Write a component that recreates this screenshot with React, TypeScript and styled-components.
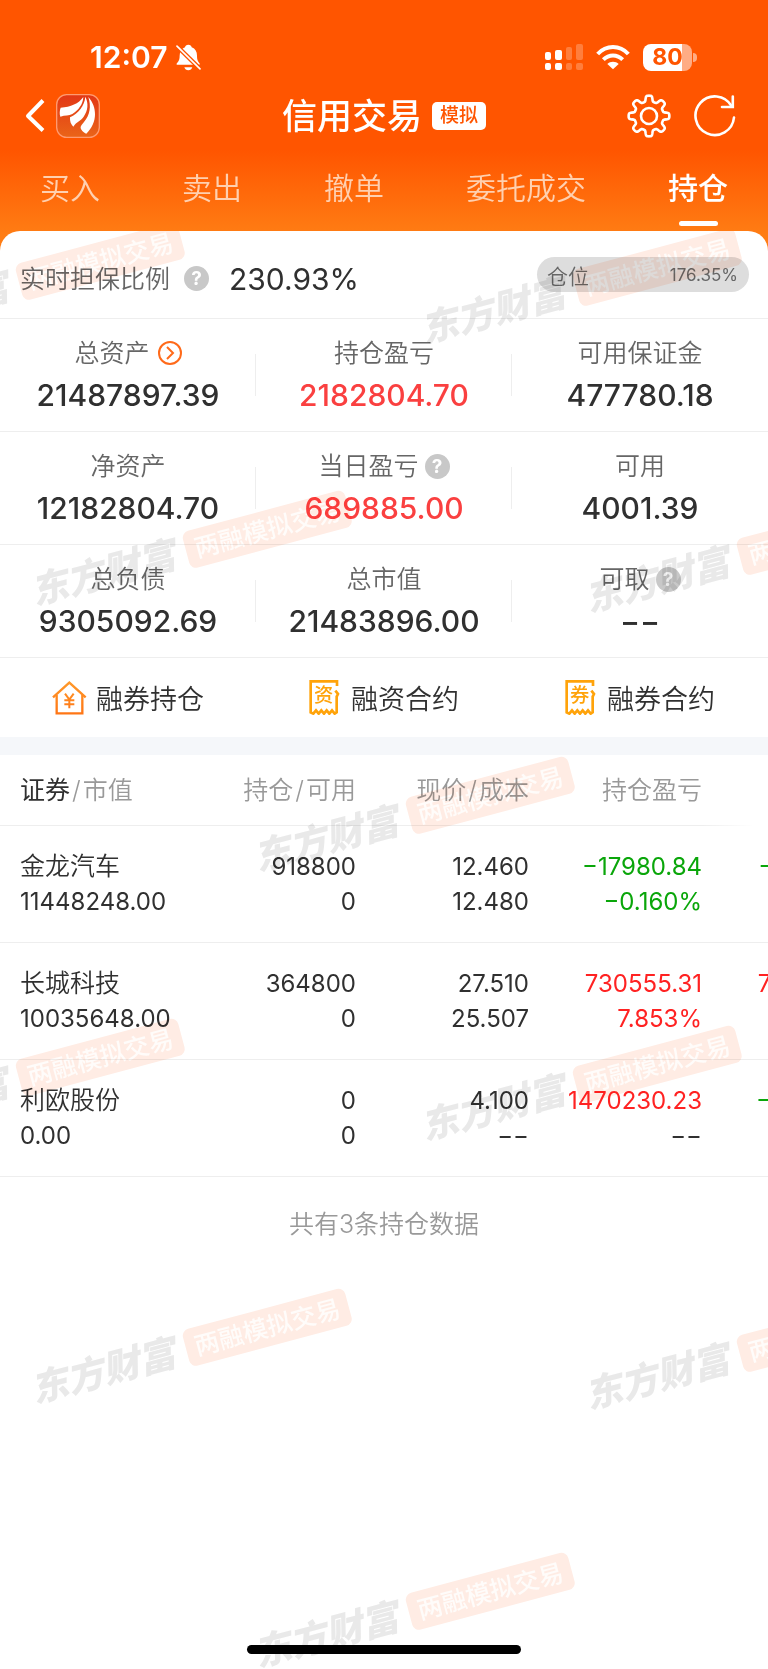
import React from "react";
import styled, { createGlobalStyle } from "styled-components";

const ORANGE = "#ff5500";
const INK = "#303030";
const GREY = "#666666";
const MUTED = "#999999";
const LINE = "#eeeeee";
const UP = "#ff2222";
const DOWN = "#0aa60a";

const Global = createGlobalStyle`
  * { box-sizing: border-box; }
  body { margin: 0; background: #fff; }
  body, button { font-family: Inter, "Noto Sans CJK SC", sans-serif; }
  button { border: 0; padding: 0; background: none; color: inherit; cursor: pointer; }
  a { color: inherit; text-decoration: none; }
`;

const Page = styled.div`
  position: relative;
  display: flex;
  flex-direction: column;
  min-height: 100vh;
  overflow: hidden;
  color: ${INK};
  background: linear-gradient(${ORANGE} 150px, #ff7d14 235px, #ff7d14 300px, #fff 300px);
`;

const StatusBar = styled.div`
  display: flex;
  align-items: center;
  justify-content: space-between;
  height: 82px;
  padding: 32px 71px 0 90px;
  color: #fff;
`;

const Clock = styled.div`
  display: flex;
  align-items: center;
  gap: 9px;
  font-size: 30px;
  font-weight: 600;
  line-height: 36px;
`;

const Indicators = styled.div`
  display: flex;
  align-items: center;
  gap: 13px;
`;

const Battery = styled.div`
  display: flex;
  align-items: center;
  gap: 1px;
`;

const BatteryBody = styled.div`
  width: 49px;
  height: 27px;
  border-radius: 8px;
  background: linear-gradient(to right, #fff 80%, #ffac84 80%);
  color: ${ORANGE};
  font-size: 23px;
  font-weight: 700;
  line-height: 27px;
  text-align: center;
`;

const BatteryTip = styled.div`
  width: 4px;
  height: 9px;
  border-radius: 0 4px 4px 0;
  background: #ffac84;
`;

const TitleBar = styled.header`
  display: grid;
  grid-template-columns: 1fr auto 1fr;
  align-items: center;
  height: 68px;
  padding: 0 24px;
  color: #fff;
`;

const BarSide = styled.div<{ $end?: boolean }>`
  display: flex;
  align-items: center;
  gap: ${(p) => (p.$end ? 22 : 10)}px;
  padding-right: ${(p) => (p.$end ? 8 : 0)}px;
  justify-content: ${(p) => (p.$end ? "flex-end" : "flex-start")};
`;

const IconButton = styled.button`
  display: flex;
`;

const Title = styled.h1`
  display: flex;
  align-items: center;
  gap: 10px;
  margin: 0;
  font-size: 35px;
  font-weight: 500;
  line-height: 48px;
`;

const ModeTag = styled.span`
  padding: 0 8px;
  border-radius: 5px;
  background: #fff;
  color: ${ORANGE};
  font-size: 19px;
  line-height: 28px;
`;

const Tabs = styled.nav`
  display: flex;
  justify-content: space-between;
  height: 81px;
  padding: 16px 40px 5px;
`;

const Tab = styled.a<{ $active?: boolean }>`
  display: flex;
  flex-direction: column;
  align-items: center;
  justify-content: space-between;
  color: ${(p) => (p.$active ? "#fff" : "#ffd0b0")};
  font-size: 30px;
  font-weight: ${(p) => (p.$active ? 500 : 350)};
  line-height: 44px;

  &::after {
    content: "";
    width: 39px;
    height: 5px;
    border-radius: 3px;
    background: ${(p) => (p.$active ? "#fff" : "transparent")};
  }
`;

const Sheet = styled.main`
  display: flex;
  flex: 1;
  flex-direction: column;
  border-radius: 20px 20px 0 0;
  background: #fff;
`;

const RatioRow = styled.section`
  display: flex;
  align-items: center;
  justify-content: space-between;
  height: 88px;
  padding: 0 19px 0 20px;
  border-bottom: 1px solid ${LINE};
`;

const Ratio = styled.div`
  display: flex;
  align-items: center;
  padding-top: 8px;
`;

const Label = styled.span`
  color: ${GREY};
  font-size: 25px;
  font-weight: 350;
  line-height: 36px;
`;

const RatioValue = styled.span`
  margin-left: 20px;
  font-size: 30px;
  line-height: 36px;
`;

const Help = styled.button<{ $gap: number }>`
  width: 25px;
  height: 25px;
  margin-left: ${(p) => p.$gap}px;
  border-radius: 50%;
  background: #c8c8c8;
  color: #fff;
  font-size: 19px;
  font-weight: 700;
  line-height: 25px;
`;

const Position = styled.div`
  display: flex;
  align-items: center;
  justify-content: space-between;
  width: 212px;
  height: 35px;
  padding: 0 11px 0 10px;
  border-radius: 18px;
  background: #dddddd;
  color: ${GREY};
  font-size: 17px;
`;

const PositionName = styled.span`
  font-size: 21px;
  font-weight: 350;
`;

const Stats = styled.dl`
  display: grid;
  grid-template-columns: repeat(3, 1fr);
  margin: 0;
`;

const Stat = styled.div`
  display: flex;
  flex-direction: column;
  align-items: center;
  height: 113px;
  padding-top: 16px;
  border-bottom: 1px solid ${LINE};
  background: linear-gradient(${LINE}, ${LINE}) right center / 1px 42px no-repeat;

  &:nth-child(3n) {
    background: none;
  }
`;

const StatName = styled.dt`
  display: flex;
  align-items: center;
`;

const StatValue = styled.dd<{ $up?: boolean }>`
  margin: 0;
  color: ${(p) => (p.$up ? "#fa4040" : INK)};
  font-size: 30px;
  font-weight: 500;
  line-height: 48px;
`;

const More = styled.button`
  display: flex;
  margin-left: 8px;
`;

const Shortcuts = styled.nav`
  display: grid;
  grid-template-columns: repeat(3, 1fr);
  height: 79px;
`;

const Shortcut = styled.a`
  display: flex;
  align-items: center;
  justify-content: center;
  gap: 9px;
  font-size: 27px;
  font-weight: 350;
`;

const Band = styled.div`
  height: 18px;
  background: #f5f7fa;
`;

const TableScroll = styled.div`
  overflow-x: auto;
  scrollbar-width: none;
`;

const Table = styled.table`
  width: 875px;
  border-collapse: separate;
  border-spacing: 0;
  table-layout: fixed;
  font-size: 24px;
  line-height: 35px;
`;

const Head = styled.th<{ $first?: boolean }>`
  width: ${(p) => (p.$first ? 183 : 173)}px;
  height: 71px;
  padding: ${(p) => (p.$first ? "0 0 0 20px" : "0")};
  border-bottom: 1px solid ${LINE};
  color: ${MUTED};
  font-size: 25px;
  font-weight: 350;
  text-align: ${(p) => (p.$first ? "left" : "right")};

  &:last-child {
    border-bottom: 0;
    background: linear-gradient(to right, ${LINE}, #fff) left bottom / 52px 1px no-repeat;
  }
`;

const HeadStrong = styled.span`
  color: ${INK};
  font-weight: 400;
`;

const Slash = styled.span`
  margin: 0 2px;
`;

const Cell = styled.td<{ $tone?: string; $first?: boolean }>`
  padding: 23px 0;
  padding-left: ${(p) => (p.$first ? 20 : 0)}px;
  border-bottom: 1px solid ${LINE};
  color: ${(p) => p.$tone || INK};
  text-align: ${(p) => (p.$first ? "left" : "right")};
  white-space: nowrap;
`;

const Line = styled.div<{ $name?: boolean; $plain?: boolean }>`
  height: 35px;
  font-size: ${(p) => (p.$name ? 25 : 24)}px;
  font-weight: ${(p) => (p.$name ? 350 : 400)};
  ${(p) => p.$plain && `color: ${INK};`}
`;

const Summary = styled.p`
  margin: 29px 0 0;
  color: ${MUTED};
  font-size: 25px;
  font-weight: 350;
  line-height: 36px;
  text-align: center;
`;

const HomeBar = styled.div`
  align-self: center;
  width: 274px;
  height: 9px;
  margin: auto 0 15px;
  border-radius: 5px;
  background: #000;
`;

const Marks = styled.div`
  position: absolute;
  inset: 231px 0 0;
  overflow: hidden;
  border-radius: 20px 20px 0 0;
  mix-blend-mode: multiply;
  pointer-events: none;
`;

const Mark = styled.div<{ $x: number; $y: number }>`
  position: absolute;
  left: ${(p) => p.$x}px;
  top: ${(p) => p.$y}px;
  display: flex;
  align-items: center;
  gap: 8px;
  width: 328px;
  height: 40px;
  transform: rotate(-15deg);
  white-space: nowrap;
`;

const MarkBrand = styled.span`
  width: 152px;
  color: #e9e9e9;
  font-size: 37px;
  font-style: italic;
  font-weight: 900;
  line-height: 40px;
`;

const MarkBadge = styled.span`
  width: 168px;
  border-radius: 7px;
  background: #ffece4;
  color: #fffcfa;
  font-size: 25px;
  font-weight: 500;
  line-height: 38px;
  text-align: center;
`;

/* Centre of each badge, relative to the sheet. */
const marks = [
  [100, 31],
  [657, 37],
  [267, 299],
  [821, 306],
  [490, 565],
  [100, 827],
  [657, 834],
  [267, 1097],
  [821, 1103],
  [490, 1361],
];

const BellOff = () => (
  <svg width="25" height="27" viewBox="0 0 75 80" fill="none">
    <path d="M37 2c6 0 9 3 10 7 11 4 16 13 16 25 0 14 3 18 8 24v4H2v-4c7-7 9-12 9-24C11 22 17 13 27 9c1-4 4-7 10-7z" fill="#fff" />
    <path d="M25 69h24c-2 6-6 9-12 9s-10-3-12-9z" fill="#fff" />
    <path d="M0 3l74 73" stroke={ORANGE} strokeWidth="13" />
    <path d="M3 6l69 68" stroke="#fff" strokeWidth="5" strokeLinecap="round" />
  </svg>
);

const Signal = () => (
  <svg width="38" height="27" viewBox="0 0 38 27" fill="#fff">
    <rect x="0" y="8" width="6" height="8" rx="2" />
    <rect x="0" y="19" width="6" height="7" rx="2" />
    <rect x="10" y="6" width="7" height="10" rx="2" />
    <rect x="10" y="19" width="7" height="7" rx="2" />
    <g opacity=".24">
      <rect x="21" y="3" width="6" height="13" rx="2" />
      <rect x="21" y="19" width="6" height="7" rx="2" />
      <rect x="31" y="0" width="7" height="16" rx="2" />
      <rect x="31" y="19" width="7" height="7" rx="2" />
    </g>
  </svg>
);

const Wifi = () => (
  <svg width="34" height="25" viewBox="0 0 102 75">
    <g fill="none" stroke="#fff" strokeWidth="12">
      <path d="M5 27C31-1 71-1 97 27" />
      <path d="M22 44C39 27 63 27 80 44" />
    </g>
    <path d="M51 73L34 57c9-9 25-9 34 0z" fill="#fff" />
  </svg>
);

const Back = () => (
  <svg width="22" height="34" viewBox="0 0 22 34" fill="none" stroke="#fff" strokeWidth="4">
    <path d="M19 1.500L4 17l15 14.500" strokeLinejoin="round" />
  </svg>
);

const Logo = () => (
  <svg width="44" height="44" viewBox="0 0 132 132">
    <defs>
      <linearGradient id="logo" x1="0" y1="0" x2="0" y2="1">
        <stop offset="0" stopColor="#e23716" />
        <stop offset="1" stopColor="#ea6418" />
      </linearGradient>
    </defs>
    <rect x="2" y="2" width="128" height="128" rx="30" fill="url(#logo)" stroke="#ff9a70" strokeWidth="4" />
    <g fill="#fff">
      <path d="M82 9C68 29 44 39 14 41c-3 8-4 18-1 27 14-5 26-2 36-8C67 48 81 32 82 9z" />
      <path d="M88 8c-3 28-20 50-46 62-1 12 3 22 10 28 10-16 22-17 31-30C96 49 98 28 88 8z" />
      <path d="M97 9c9 28 5 54-13 75-9 11-10 13-10 17 0 5 8 14 17 18 17-16 26-37 26-58 0-19-6-36-20-52z" />
    </g>
  </svg>
);

const gearPath = (() => {
  const pts: string[] = [];
  const steps = 160;
  for (let i = 0; i <= steps; i += 1) {
    const a = (i / steps) * Math.PI * 2;
    const r = 17.5 + 2.9 * Math.tanh(2.4 * Math.cos(8 * a));
    pts.push(`${(22 + r * Math.sin(a)).toFixed(2)} ${(22 - r * Math.cos(a)).toFixed(2)}`);
  }
  return `M${pts.join("L")}Z`;
})();

const Gear = () => (
  <svg width="44" height="44" viewBox="0 0 44 44" fill="none" stroke="#fff" strokeWidth="2.600" strokeLinejoin="round">
    <path d={gearPath} />
    <circle cx="22" cy="22" r="8" />
  </svg>
);

const Refresh = () => (
  <svg width="43" height="44" viewBox="0 0 43 44" fill="none" stroke="#fff" strokeWidth="2.600" strokeLinecap="round">
    <path d="M41 23.500A19.300 19.300 0 1 1 38.500 12" />
    <path d="M39.800 2.500v10.500H29" />
  </svg>
);

const Go = () => (
  <svg width="24" height="24" viewBox="0 0 24 24" fill="none" stroke="#ff6a1a" strokeWidth="2">
    <circle cx="12" cy="12" r="11" />
    <path d="M9 6l6 6-6 6" />
  </svg>
);

const House = () => (
  <svg width="35" height="34" viewBox="0 0 105 102" fill="none" stroke="url(#house)" strokeWidth="7">
    <defs>
      <linearGradient id="house" gradientUnits="userSpaceOnUse" x1="0" y1="0" x2="0" y2="102">
        <stop offset="0" stopColor="#ff9a2a" />
        <stop offset="1" stopColor="#ff7414" />
      </linearGradient>
    </defs>
    <path d="M3 49L52 5l49 44" />
    <path d="M14 42v55h77V42" />
    <path d="M39 38l13 18 13-18M52 56v26M37 58h30M37 70h30" strokeWidth="6" />
  </svg>
);

const Bill = ({ mark }: { mark: string }) => (
  <svg width="33" height="35" viewBox="0 0 99 105">
    <path
      d="M84 18V4H5v93l8 4 8-10 8 10 8-10 8 10 8-10 8 10 8-10 8 10 6-4V50l4-8-8-10"
      fill="none"
      stroke="#ffa30a"
      strokeWidth="8"
    />
    <text x="44" y="66" textAnchor="middle" fontSize="58" fontWeight="500" fill="#ffa30a">
      {mark}
    </text>
  </svg>
);

const tabs = ["买入", "卖出", "撤单", "委托成交", "持仓"];

const NONE = "−−";

type StatItem = { name: string; value: string; up?: boolean; help?: boolean; more?: boolean };

const stats: StatItem[] = [
  { name: "总资产", value: "21487897.39", more: true },
  { name: "持仓盈亏", value: "2182804.70", up: true },
  { name: "可用保证金", value: "477780.18" },
  { name: "净资产", value: "12182804.70" },
  { name: "当日盈亏", value: "689885.00", up: true, help: true },
  { name: "可用", value: "4001.39" },
  { name: "总负债", value: "9305092.69" },
  { name: "总市值", value: "21483896.00" },
  { name: "可取", value: NONE, help: true },
];

const holdings = [
  { name: "金龙汽车", worth: "11448248.00", held: "918800", free: "0", price: "12.460", cost: "12.480", gain: "−17980.84", rate: "−0.160%", tone: DOWN, day: "−11480.00", dayTone: DOWN },
  { name: "长城科技", worth: "10035648.00", held: "364800", free: "0", price: "27.510", cost: "25.507", gain: "730555.31", rate: "7.853%", tone: UP, day: "730555.31", dayTone: UP },
  { name: "利欧股份", worth: "0.00", held: "0", free: "0", price: "4.100", cost: NONE, gain: "1470230.23", rate: NONE, tone: UP, day: "−30670.31", dayTone: DOWN },
];

export default function App() {
  return (
    <Page>
      <Global />
      <StatusBar>
        <Clock>
          12:07
          <BellOff />
        </Clock>
        <Indicators>
          <Signal />
          <Wifi />
          <Battery>
            <BatteryBody>80</BatteryBody>
            <BatteryTip />
          </Battery>
        </Indicators>
      </StatusBar>

      <TitleBar>
        <BarSide>
          <IconButton aria-label="返回"><Back /></IconButton>
          <Logo />
        </BarSide>
        <Title>
          信用交易<ModeTag>模拟</ModeTag>
        </Title>
        <BarSide $end>
          <IconButton aria-label="设置"><Gear /></IconButton>
          <IconButton aria-label="刷新"><Refresh /></IconButton>
        </BarSide>
      </TitleBar>

      <Tabs>
        {tabs.map((t) => (
          <Tab key={t} href="#" $active={t === "持仓"}>{t}</Tab>
        ))}
      </Tabs>

      <Sheet>
        <RatioRow>
          <Ratio>
            <Label>实时担保比例</Label>
            <Help $gap={14} aria-label="说明">?</Help>
            <RatioValue>230.93%</RatioValue>
          </Ratio>
          <Position>
            <PositionName>仓位</PositionName>
            176.35%
          </Position>
        </RatioRow>

        <Stats>
          {stats.map((s) => (
            <Stat key={s.name}>
              <StatName>
                <Label>{s.name}</Label>
                {s.more && <More aria-label="详情"><Go /></More>}
                {s.help && <Help $gap={6} aria-label="说明">?</Help>}
              </StatName>
              <StatValue $up={s.up}>{s.value}</StatValue>
            </Stat>
          ))}
        </Stats>

        <Shortcuts>
          <Shortcut href="#"><House />融券持仓</Shortcut>
          <Shortcut href="#"><Bill mark="资" />融资合约</Shortcut>
          <Shortcut href="#"><Bill mark="券" />融券合约</Shortcut>
        </Shortcuts>

        <Band />

        <TableScroll>
          <Table>
            <thead>
              <tr>
                <Head $first><HeadStrong>证券</HeadStrong><Slash>/</Slash>市值</Head>
                <Head>持仓<Slash>/</Slash>可用</Head>
                <Head>现价<Slash>/</Slash>成本</Head>
                <Head>持仓盈亏</Head>
                <Head>当日盈亏</Head>
              </tr>
            </thead>
            <tbody>
              {holdings.map((h) => (
                <tr key={h.name}>
                  <Cell $first>
                    <Line $name>{h.name}</Line>
                    <Line>{h.worth}</Line>
                  </Cell>
                  <Cell>
                    <Line>{h.held}</Line>
                    <Line>{h.free}</Line>
                  </Cell>
                  <Cell>
                    <Line>{h.price}</Line>
                    <Line>{h.cost}</Line>
                  </Cell>
                  <Cell $tone={h.tone}>
                    <Line>{h.gain}</Line>
                    <Line $plain={h.rate === NONE}>{h.rate}</Line>
                  </Cell>
                  <Cell $tone={h.dayTone}>
                    <Line>{h.day}</Line>
                    <Line />
                  </Cell>
                </tr>
              ))}
            </tbody>
          </Table>
        </TableScroll>

        <Summary>共有3条持仓数据</Summary>
        <HomeBar />
      </Sheet>

      <Marks aria-hidden="true">
        {marks.map(([x, y]) => (
          <Mark key={`${x}-${y}`} $x={x - 241} $y={y}>
            <MarkBrand>东方财富</MarkBrand>
            <MarkBadge>两融模拟交易</MarkBadge>
          </Mark>
        ))}
      </Marks>
    </Page>
  );
}
